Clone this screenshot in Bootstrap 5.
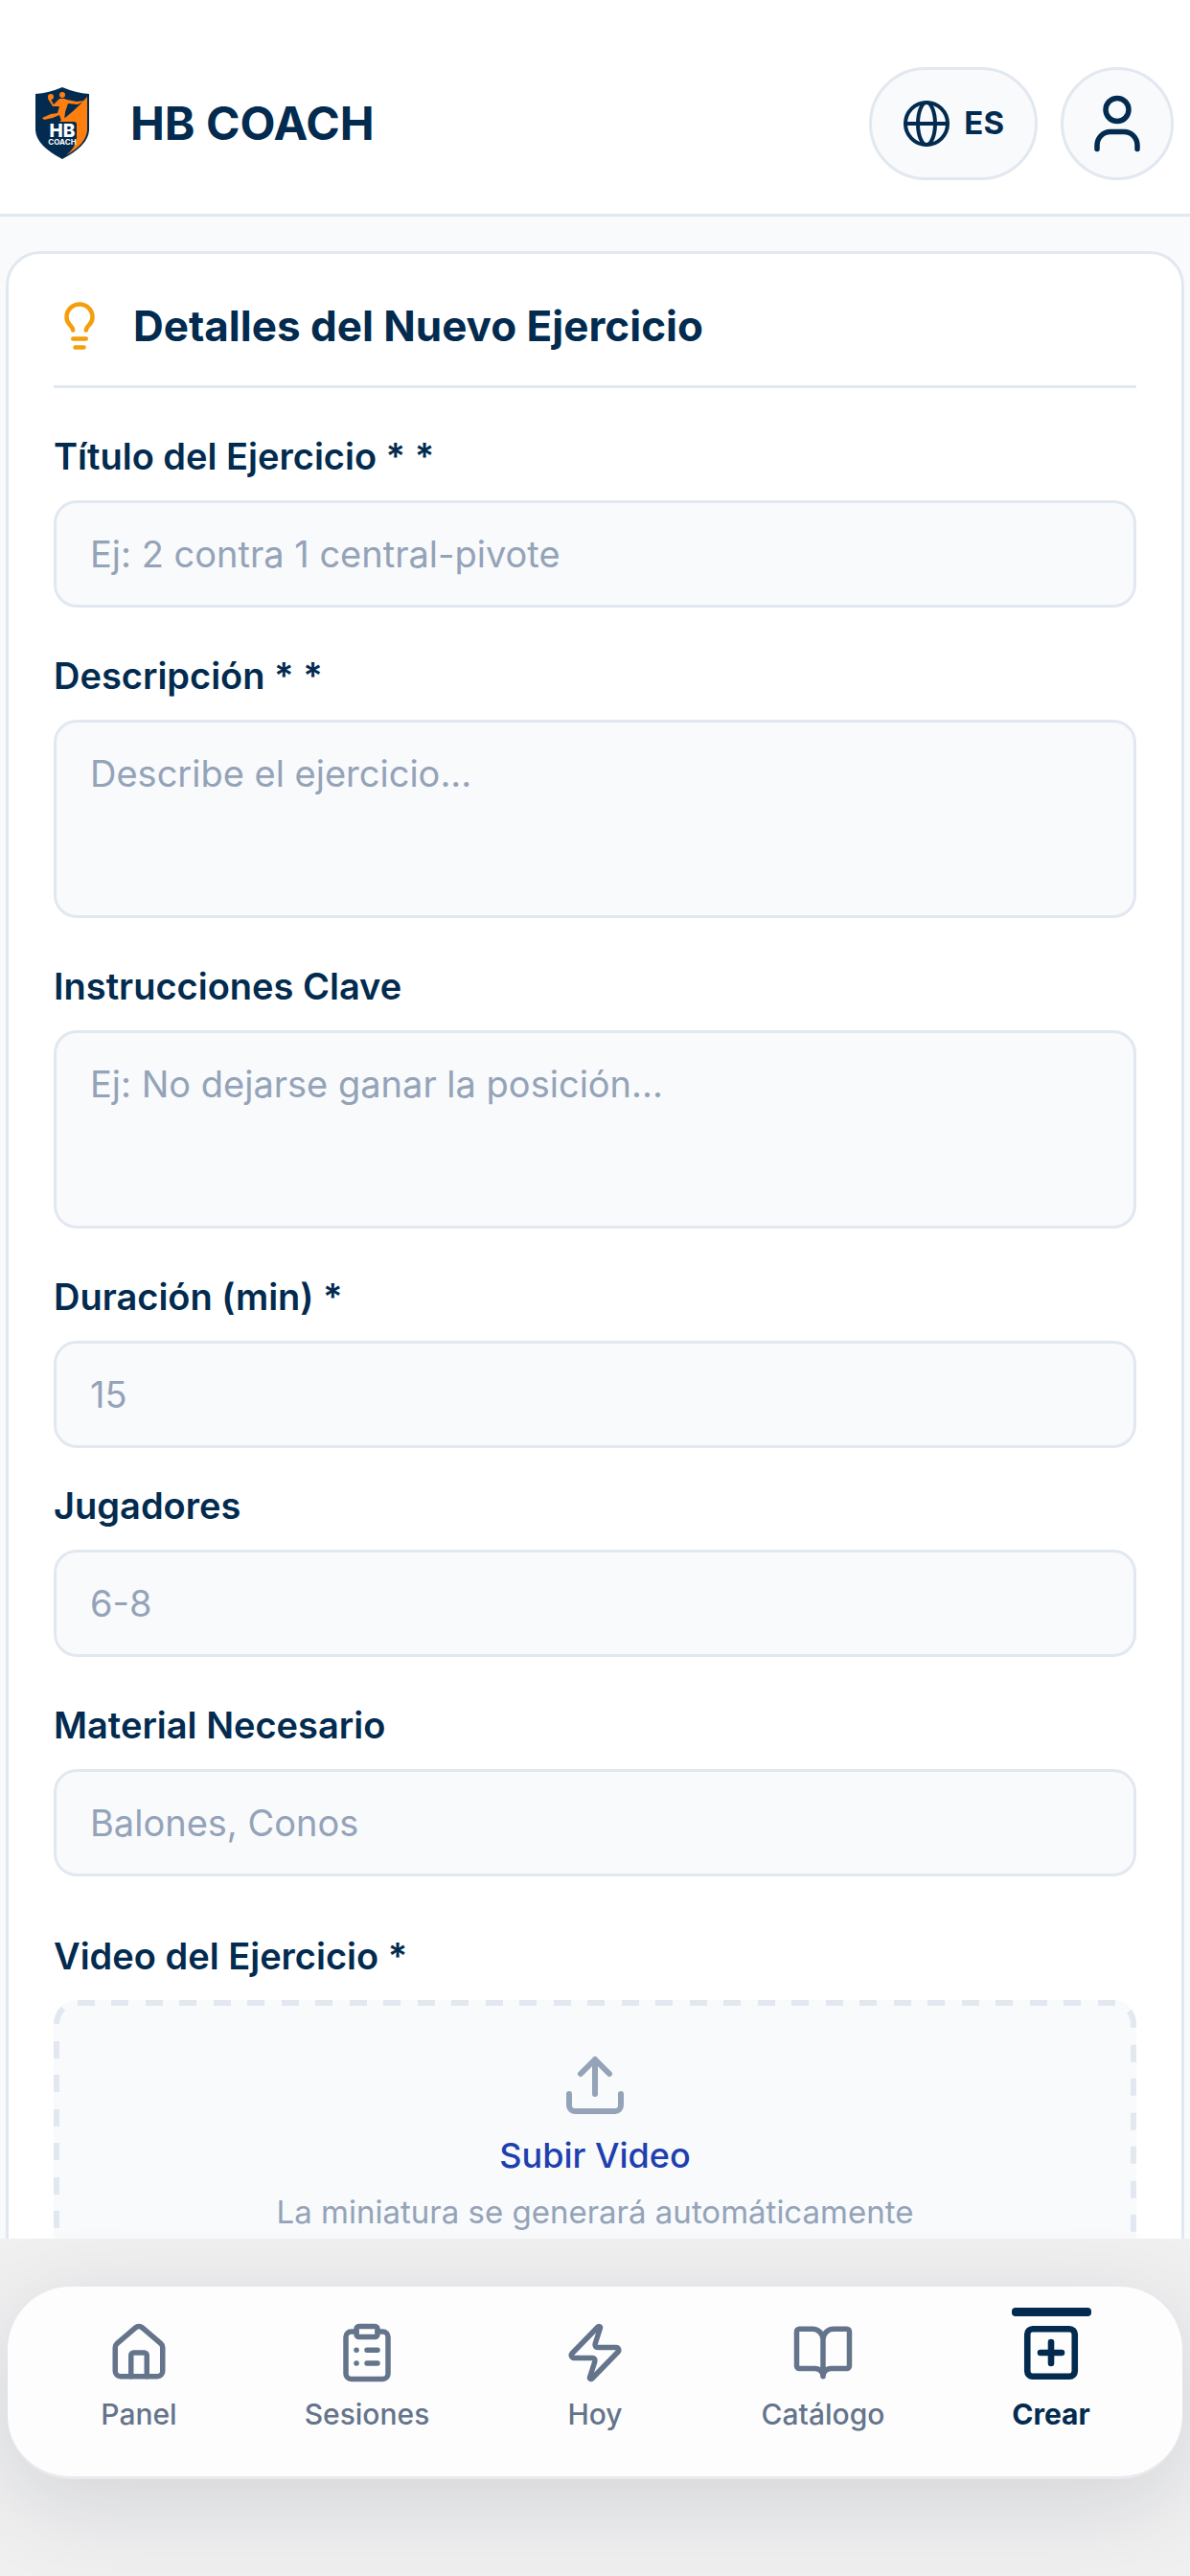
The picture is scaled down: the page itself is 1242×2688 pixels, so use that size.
<!DOCTYPE html>
<html lang="es">

<head>
  <meta charset="UTF-8">
  <meta name="viewport" content="width=device-width, initial-scale=1.0">
  <title>HB COACH</title>
  <!-- Bootstrap CSS -->
  <link href="https://cdn.jsdelivr.net/npm/bootstrap@5.3.2/dist/css/bootstrap.min.css" rel="stylesheet">
  <style>
    :root {
      --navy: #022b4f;
      --line: #e2e8f0;
      --soft: #f8fafc;
      --muted: #94a3b8;
      --slate: #64748b;
    }

    body {
      font-family: Inter, "Liberation Sans", sans-serif;
      color: var(--navy);
      background-color: var(--soft);
    }

    svg {
      display: block;
      flex-shrink: 0;
      fill: none;
      stroke: currentColor;
      stroke-width: 2;
      stroke-linecap: round;
      stroke-linejoin: round;
    }

    /* Top bar */
    .app-header {
      padding: 70px 17px 35px 36px;
      border-bottom: 3px solid var(--line);
    }

    .app-brand {
      gap: 42px;
      font-size: 48px;
      line-height: 56px;
      color: var(--navy);
    }

    .app-actions {
      gap: 24px;
    }

    .pill-btn {
      height: 118px;
      min-width: 118px;
      padding: 0 32px;
      gap: 14px;
      border: 3px solid var(--line);
      background-color: var(--soft);
      color: var(--navy);
      font-size: 33px;
    }

    .round-btn {
      padding: 0;
    }

    /* Form */
    .app-main {
      padding: 36px 6px 0;
      min-height: 0;
      overflow-y: auto;
      scrollbar-width: none;
    }

    .form-panel {
      padding: 48px 47px;
      border: 3px solid var(--line);
      border-radius: 36px;
    }

    .form-title {
      gap: 29px;
      padding-bottom: 35px;
      border-bottom: 3px solid var(--line);
      font-size: 44px;
      line-height: 54px;
    }

    .form-title svg {
      color: #f59e0b;
    }

    .field {
      margin-top: 47px;
    }

    .field-near {
      margin-top: 36px;
    }

    .field-far {
      margin-top: 59px;
    }

    .field .form-label {
      margin-bottom: 22px;
      font-size: 38px;
      line-height: 48px;
    }

    .field .form-control {
      padding: 28px 35px;
      border: 3px solid var(--line);
      border-radius: 24px;
      background-color: var(--soft);
      font-size: 38px;
      line-height: 50px;
      resize: none;
    }

    .field textarea.form-control {
      height: 207px;
    }

    .field .form-control::placeholder {
      color: var(--muted);
    }

    .upload-box {
      gap: 12px;
      padding: 53px 24px 60px;
      border-radius: 24px;
      background-color: var(--soft);
      color: var(--muted);
      cursor: pointer;
    }

    .upload-frame {
      stroke: var(--line);
      stroke-width: 6;
      stroke-linecap: butt;
      stroke-dasharray: 18 17 18 18;
    }

    .upload-frame rect {
      width: calc(100% - 6px);
      height: calc(100% - 6px);
    }

    .upload-action {
      color: #1e40af;
      font-size: 36px;
      line-height: 50px;
    }

    .upload-note {
      font-size: 33px;
      line-height: 44px;
    }

    /* Bottom navigation */
    .app-footer {
      padding: 50px 8px 101px;
      background-color: #f0f0f1;
    }

    .tab-bar {
      padding: 22px 18px 46px;
      border-radius: 66px;
      border-bottom: 3px solid #e9e9ee;
      background-color: #fdfdfe;
      box-shadow: 0 24px 96px rgba(15, 23, 42, 0.13);
    }

    .tab-link {
      flex: 1 1 0;
      color: var(--slate);
      font-size: 30px;
      line-height: 38px;
    }

    .tab-link svg {
      margin: 5px 0 12px;
    }

    .tab-link::before {
      content: "";
      width: 83px;
      height: 9px;
      border-radius: 4px;
    }

    .tab-link.active {
      color: var(--navy);
    }

    .tab-link.active::before {
      background-color: var(--navy);
    }

    .tab-link.active svg {
      stroke-width: 2.4;
    }
  </style>
</head>

<body class="vh-100 d-flex flex-column overflow-hidden">
  <header class="app-header bg-white d-flex align-items-center justify-content-between">
    <a href="#" class="app-brand d-flex align-items-center fw-bold text-decoration-none">
      <svg width="58" height="76" viewBox="0 0 58 76" aria-hidden="true">
        <g stroke="none">
          <path d="M29 0Q43 6 57 7V45Q56 61 29 75Q2 61 1 45V7Q15 6 29 0Z" fill="#022b4f" />
          <path d="M55 10V45Q54 59 33 71Q43 63 44 53V39Q44 36 41 36H26Q40 27 55 10Z" fill="#ff7f0e" />
          <circle cx="29" cy="8" r="3" fill="#ff7f0e" />
          <circle cx="17" cy="10" r="3" fill="#ff7f0e" />
          <path d="M16 11L20 18L26 12Q30 11 34 13L44 15L53 14L45 18L35 17L32 26L31 35H28L26 29L19 32L10 34L8 32L17 28L24 27L26 20L19 20L14 12Z" fill="#ff7f0e" />
          <g fill="#fff" font-family="Inter, sans-serif" font-weight="800" text-anchor="middle">
            <text x="29" y="52" font-size="19">HB</text>
            <text x="29" y="60" font-size="8" font-weight="700">COACH</text>
          </g>
        </g>
      </svg>
      <span>HB COACH</span>
    </a>
    <div class="app-actions d-flex">
      <button type="button" class="pill-btn btn rounded-pill d-flex align-items-center fw-bold">
        <svg width="50" height="50" viewBox="0 0 50 50" aria-hidden="true">
          <g stroke-width="4">
            <circle cx="25" cy="25" r="22" />
            <ellipse cx="25" cy="25" rx="9" ry="22" />
            <path d="M3 25h44" />
          </g>
        </svg>
        ES
      </button>
      <button type="button" class="pill-btn round-btn btn rounded-circle d-flex align-items-center justify-content-center" aria-label="Perfil">
        <svg width="60" height="60" viewBox="0 0 60 60" aria-hidden="true">
          <g stroke-width="5.5">
            <circle cx="30" cy="15.500" r="12" />
            <path d="M9 56.500v-4a14 14 0 0 1 14-14h14a14 14 0 0 1 14 14v4" />
          </g>
        </svg>
      </button>
    </div>
  </header>

  <main class="app-main flex-fill">
    <form class="form-panel bg-white">
      <h2 class="form-title d-flex align-items-center fw-bold mb-0">
        <svg width="54" height="54" viewBox="0 0 24 24" aria-hidden="true">
          <path d="M15 14c.2-1 .7-1.7 1.5-2.5 1-.9 1.5-2.2 1.5-3.5A6 6 0 0 0 6 8c0 1 .2 2.2 1.5 3.5.7.7 1.3 1.5 1.5 2.5M9 18h6M10 22h4" />
        </svg>
        Detalles del Nuevo Ejercicio
      </h2>

      <div class="field">
        <label for="title" class="form-label d-block fw-semibold">Título del Ejercicio * *</label>
        <input type="text" class="form-control" id="title" name="title" placeholder="Ej: 2 contra 1 central-pivote">
      </div>

      <div class="field">
        <label for="description" class="form-label d-block fw-semibold">Descripción * *</label>
        <textarea class="form-control d-block" id="description" name="description" placeholder="Describe el ejercicio..."></textarea>
      </div>

      <div class="field">
        <label for="instructions" class="form-label d-block fw-semibold">Instrucciones Clave</label>
        <textarea class="form-control d-block" id="instructions" name="instructions" placeholder="Ej: No dejarse ganar la posición..."></textarea>
      </div>

      <div class="field">
        <label for="duration" class="form-label d-block fw-semibold">Duración (min) *</label>
        <input type="text" inputmode="numeric" class="form-control" id="duration" name="duration" placeholder="15">
      </div>

      <div class="field field-near">
        <label for="players" class="form-label d-block fw-semibold">Jugadores</label>
        <input type="text" class="form-control" id="players" name="players" placeholder="6-8">
      </div>

      <div class="field">
        <label for="material" class="form-label d-block fw-semibold">Material Necesario</label>
        <input type="text" class="form-control" id="material" name="material" placeholder="Balones, Conos">
      </div>

      <div class="field field-far">
        <label for="video" class="form-label d-block fw-semibold">Video del Ejercicio *</label>
        <label for="video" class="upload-box position-relative d-flex flex-column align-items-center">
          <svg class="upload-frame position-absolute top-0 start-0 w-100 h-100" aria-hidden="true">
            <rect x="3" y="3" rx="22" />
          </svg>
          <svg width="72" height="72" viewBox="0 0 24 24" aria-hidden="true">
            <path d="M21 15v4a2 2 0 0 1-2 2H5a2 2 0 0 1-2-2v-4M17 8l-5-5-5 5M12 3v12" />
          </svg>
          <span class="upload-action fw-medium">Subir Video</span>
          <span class="upload-note">La miniatura se generará automáticamente</span>
          <input type="file" class="visually-hidden" id="video" name="video" accept="video/*">
        </label>
      </div>
    </form>
  </main>

  <footer class="app-footer position-relative">
    <nav class="tab-bar d-flex" aria-label="Principal">
      <a href="#" class="tab-link d-flex flex-column align-items-center text-decoration-none fw-medium">
        <svg width="66" height="66" viewBox="0 0 24 24" aria-hidden="true">
          <path d="M15 21v-8a1 1 0 0 0-1-1h-4a1 1 0 0 0-1 1v8" />
          <path d="M3 10a2 2 0 0 1 .709-1.528l7-5.999a2 2 0 0 1 2.582 0l7 5.999A2 2 0 0 1 21 10v9a2 2 0 0 1-2 2H5a2 2 0 0 1-2-2z" />
        </svg>
        Panel
      </a>
      <a href="#" class="tab-link d-flex flex-column align-items-center text-decoration-none fw-medium">
        <svg width="66" height="66" viewBox="0 0 24 24" aria-hidden="true">
          <rect x="8" y="2" width="8" height="4" rx="1" />
          <path d="M16 4h2a2 2 0 0 1 2 2v14a2 2 0 0 1-2 2H6a2 2 0 0 1-2-2V6a2 2 0 0 1 2-2h2M12 11h4M12 16h4M8 11h.01M8 16h.01" />
        </svg>
        Sesiones
      </a>
      <a href="#" class="tab-link d-flex flex-column align-items-center text-decoration-none fw-medium">
        <svg width="66" height="66" viewBox="0 0 24 24" aria-hidden="true">
          <path d="M4 14a1 1 0 0 1-.78-1.63l9.9-10.2a.5.5 0 0 1 .86.46l-1.92 6.02A1 1 0 0 0 13 10h7a1 1 0 0 1 .78 1.63l-9.9 10.2a.5.5 0 0 1-.86-.46l1.92-6.02A1 1 0 0 0 11 14z" />
        </svg>
        Hoy
      </a>
      <a href="#" class="tab-link d-flex flex-column align-items-center text-decoration-none fw-medium">
        <svg width="66" height="66" viewBox="0 0 24 24" aria-hidden="true">
          <path d="M12 7v14M3 18a1 1 0 0 1-1-1V4a1 1 0 0 1 1-1h5a4 4 0 0 1 4 4 4 4 0 0 1 4-4h5a1 1 0 0 1 1 1v13a1 1 0 0 1-1 1h-6a3 3 0 0 0-3 3 3 3 0 0 0-3-3z" />
        </svg>
        Catálogo
      </a>
      <a href="#" class="tab-link active d-flex flex-column align-items-center text-decoration-none fw-bold" aria-current="page">
        <svg width="66" height="66" viewBox="0 0 24 24" aria-hidden="true">
          <rect x="3" y="3" width="18" height="18" rx="2" />
          <path d="M8 12h8M12 8v8" />
        </svg>
        Crear
      </a>
    </nav>
  </footer>
  <script src="https://cdn.jsdelivr.net/npm/bootstrap@5.3.2/dist/js/bootstrap.bundle.min.js"></script>
</body>

</html>
